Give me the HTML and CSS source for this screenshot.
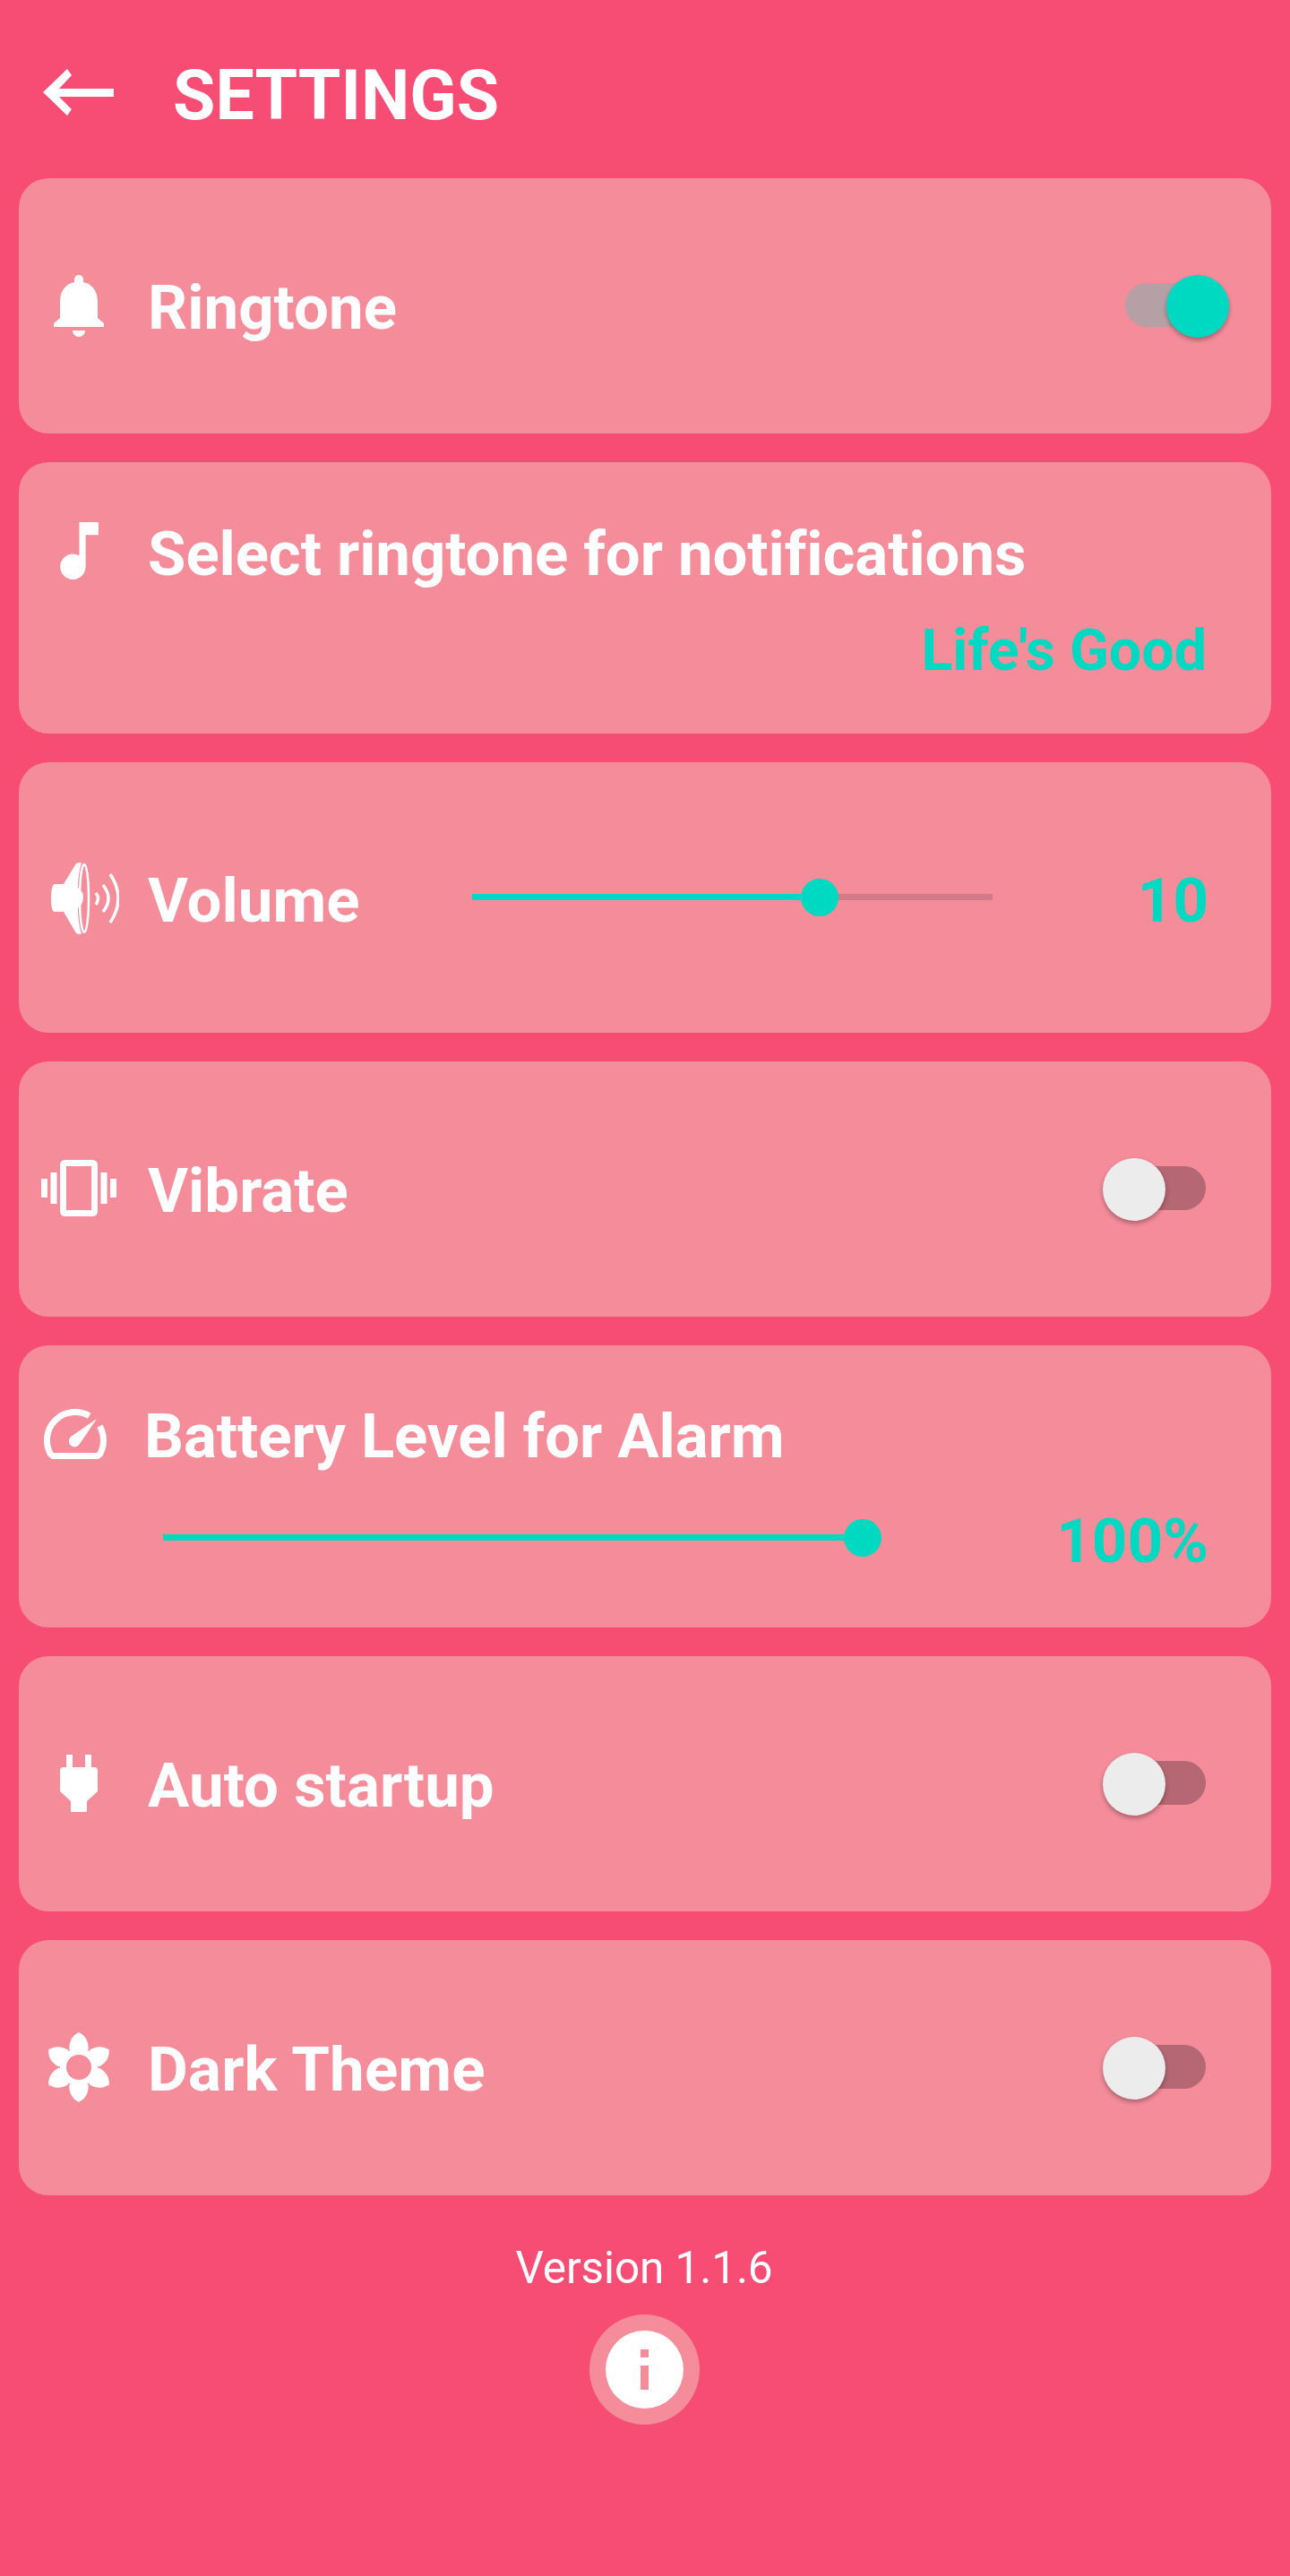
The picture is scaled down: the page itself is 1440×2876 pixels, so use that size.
FILE: index.html
```html
<!DOCTYPE html>
<html lang="en">
<head>
  <meta charset="UTF-8" />
  <meta name="viewport" content="width=device-width, initial-scale=1.0" />
  <title>Settings</title>
  <link rel="stylesheet" href="styles.css">
</head>
<body>
  <header class="topbar">
    <svg class="back-icon" viewBox="0 0 79 52"><path d="M0 26 27 0 32 7 18 22H79V31H18L32 45 27 52Z"/></svg>
    <h1 class="page-title">SETTINGS</h1>
  </header>

  <main class="settings">
    <section class="card card-toggle">
      <div class="row">
        <span class="icon-col"><svg class="icon icon-bell" viewBox="0 0 56 69"><path d="M23 8V5a5 5 0 0 1 10 0V8C43 10 49 18 49 30V48L56 54V58H0V54L7 48V30C7 18 13 10 23 8Z"/><path d="M21 62H35C35 66 32 69 28 69 24 69 21 66 21 62Z"/></svg></span>
        <span class="label">Ringtone</span>
        <div class="switch switch-on"><span class="thumb"></span></div>
      </div>
    </section>

    <section class="card card-ringtone">
      <div class="row">
        <span class="icon-col"><svg class="icon icon-note" viewBox="6 3 12 18"><path d="M12 3v10.55c-.59-.34-1.27-.55-2-.55-2.21 0-4 1.79-4 4s1.79 4 4 4 4-1.79 4-4V7h4V3h-6z"/></svg></span>
        <span class="label label-tight">Select ringtone for notifications</span>
      </div>
      <div class="ringtone-name value">Life's Good</div>
    </section>

    <section class="card card-volume">
      <div class="row">
        <span class="icon-col"><svg class="icon icon-volume" viewBox="0 0 76 80">
          <path d="M4 24H14L28 1Q30 0 34 0C31 10 30 20 30 28Q36 32 36 39T30 51C30 60 31 70 34 80Q30 80 28 79L14 55H4Q0 55 0 40T4 24Z"/>
          <ellipse class="icon-line" cx="37" cy="40" rx="5" ry="38"/>
          <path class="icon-line icon-waves" d="M50 34Q55 40 50 47M58 25Q70 40 58 55M66 13Q84 40 66 67"/>
        </svg></span>
        <span class="label label-volume">Volume</span>
        <div class="slider slider-volume">
          <div class="slider-fill" style="width: 66.7%"><span class="slider-thumb"></span></div>
        </div>
        <span class="value value-end">10</span>
      </div>
    </section>

    <section class="card card-toggle">
      <div class="row">
        <span class="icon-col"><svg class="icon icon-vibrate" viewBox="0 0 84 63">
          <rect class="icon-line icon-phone" x="24.5" y="3.5" width="35" height="56" rx="2"/>
          <rect x="0" y="21" width="7" height="21"/><rect x="10.500" y="14" width="7" height="35"/>
          <rect x="66.500" y="14" width="7" height="35"/><rect x="77" y="21" width="7" height="21"/>
        </svg></span>
        <span class="label">Vibrate</span>
        <div class="switch"><span class="thumb"></span></div>
      </div>
    </section>

    <section class="card card-battery">
      <div class="row">
        <span class="icon-col icon-col-battery"><svg class="icon icon-gauge" viewBox="0 0 70 56">
          <path class="icon-line icon-gauge-line" d="M50.750 7.700A31.500 31.500 0 0 0 7.700 50.750L10 52.500H60L62.300 50.750A31.500 31.500 0 0 0 62.300 19.250"/>
          <path d="M59 11 30 31A6.500 6.500 0 1 0 40 39Z"/>
        </svg></span>
        <span class="label label-tight">Battery Level for Alarm</span>
      </div>
      <div class="row row-battery">
        <div class="slider slider-battery">
          <div class="slider-fill" style="width: 100%"><span class="slider-thumb"></span></div>
        </div>
        <span class="value value-end">100%</span>
      </div>
    </section>

    <section class="card card-toggle">
      <div class="row">
        <span class="icon-col"><svg class="icon icon-plug" viewBox="0 0 42 64"><path d="M7 0H14V14H28V0H35V14H38Q42 14 42 18V41L30 52V64H12V52L0 41V18Q0 14 4 14H7Z"/></svg></span>
        <span class="label">Auto startup</span>
        <div class="switch"><span class="thumb"></span></div>
      </div>
    </section>

    <section class="card card-toggle">
      <div class="row">
        <span class="icon-col"><svg class="icon icon-flower" viewBox="-34 -39 68 78">
          <path d="M0-39C8-35 11-28 10.700-20L0-5-10.700-20C-11-28-8-35 0-39Z"/>
          <path transform="rotate(60)" d="M0-39C8-35 11-28 10.700-20L0-5-10.700-20C-11-28-8-35 0-39Z"/>
          <path transform="rotate(120)" d="M0-39C8-35 11-28 10.700-20L0-5-10.700-20C-11-28-8-35 0-39Z"/>
          <path transform="rotate(180)" d="M0-39C8-35 11-28 10.700-20L0-5-10.700-20C-11-28-8-35 0-39Z"/>
          <path transform="rotate(240)" d="M0-39C8-35 11-28 10.700-20L0-5-10.700-20C-11-28-8-35 0-39Z"/>
          <path transform="rotate(300)" d="M0-39C8-35 11-28 10.700-20L0-5-10.700-20C-11-28-8-35 0-39Z"/>
          <circle r="21"/>
          <circle class="icon-hole" r="14"/>
        </svg></span>
        <span class="label label-wide">Dark Theme</span>
        <div class="switch"><span class="thumb"></span></div>
      </div>
    </section>
  </main>

  <footer class="about">
    <div class="version">Version 1.1.6</div>
    <div class="info-ring">
      <svg class="info-icon" viewBox="0 0 87 87">
        <circle cx="43.500" cy="43.500" r="43.500"/>
        <rect class="icon-hole" x="39" y="21" width="9" height="9"/>
        <rect class="icon-hole" x="39" y="39" width="9" height="27"/>
      </svg>
    </div>
  </footer>
</body>
</html>
```

FILE: styles.css
```css
body {
  font-family: 'Roboto', Arial, sans-serif;
  margin: 0;
  padding: 0;
  min-height: 2876px;
  box-sizing: border-box;
  background-color: #f74c73;
  color: white;
}
svg {
  display: block;
  fill: white;
}
.icon-line {
  fill: none;
  stroke: white;
  stroke-width: 2.5;
}
.icon-hole {
  fill: #f48c9a;
}

/* top bar */
.topbar {
  display: flex;
  align-items: flex-start;
  height: 199px;
  padding: 69px 0 0 48px;
  box-sizing: border-box;
}
.back-icon {
  width: 79px;
  height: 52px;
  margin-top: 8px;
  margin-right: 66px;
}
.page-title {
  margin: 0;
  font-size: 77px;
  line-height: 77px;
  font-weight: 700;
}

/* cards */
.settings {
  display: flex;
  flex-direction: column;
  gap: 32px;
  padding: 0 21px;
}
.card {
  background-color: #f48c9a;
  border-radius: 33px;
  box-sizing: border-box;
  padding-right: 70px;
}
.card-toggle {
  height: 285px;
  padding-top: 105px;
}
.card-ringtone {
  height: 302.5px;
  padding-top: 62.5px;
}
.card-volume {
  height: 302.5px;
  padding-top: 115px;
}
.card-battery {
  height: 315px;
  padding-top: 62.4px;
}
.row {
  display: flex;
  align-items: flex-start;
  height: 80px;
}
.row-battery {
  margin-top: 37px;
  padding-left: 161px;
}
.icon-col {
  display: flex;
  justify-content: center;
  flex: 0 0 134px;
  margin-right: 10px;
}
.icon-col-battery {
  flex-basis: 126px;
  margin-right: 14px;
}
.label {
  font-size: 69px;
  line-height: 80px;
  font-weight: 700;
  white-space: nowrap;
}
.label-tight {
  letter-spacing: -0.1px;
}
.label-wide {
  letter-spacing: 0.18px;
}
.label-volume {
  width: 362px;
}
.value {
  font-size: 69px;
  line-height: 80px;
  font-weight: 700;
  color: #00d9c2;
  white-space: nowrap;
}
.value-end {
  margin-left: auto;
}
.ringtone-name {
  font-size: 64.5px;
  text-align: right;
  margin-top: 27.5px;
  padding-right: 2px;
}

/* icons */
.icon-bell {
  width: 56px;
  height: 69px;
  margin-top: 3px;
}
.icon-note {
  width: 43px;
  height: 64px;
  margin-top: 4.5px;
}
.icon-volume {
  width: 76px;
  height: 80px;
  margin-top: -3px;
  margin-left: 14px;
}
.icon-waves {
  stroke-width: 3.5;
}
.icon-vibrate {
  width: 84px;
  height: 63px;
  margin-top: 5px;
}
.icon-phone {
  stroke-width: 7;
}
.icon-gauge {
  width: 70px;
  height: 56px;
  margin-top: 9px;
}
.icon-gauge-line {
  stroke-width: 7;
}
.icon-plug {
  width: 42px;
  height: 64px;
  margin-top: 5px;
}
.icon-flower {
  width: 68px;
  height: 78px;
  margin-top: -2px;
}

/* switches */
.switch {
  position: relative;
  flex: 0 0 90px;
  height: 49px;
  margin: 12px 3px 0 auto;
  border-radius: 25px;
  background-color: #b56773;
}
.switch-on {
  background-color: #b5a0a5;
}
.thumb {
  position: absolute;
  top: -9px;
  left: -25px;
  width: 70px;
  height: 70px;
  border-radius: 50%;
  background-color: #ececec;
  box-shadow: 0 3px 5px rgba(0, 0, 0, 0.3);
}
.switch-on .thumb {
  left: 46px;
  background-color: #00d9c2;
}

/* sliders */
.slider {
  height: 7px;
  margin-top: 32px;
  background-color: #d27b88;
}
.slider-volume {
  width: 581px;
}
.slider-battery {
  width: 781px;
}
.slider-fill {
  position: relative;
  height: 100%;
  background-color: #00d9c2;
}
.slider-thumb {
  position: absolute;
  top: -17px;
  right: -21px;
  width: 42px;
  height: 42px;
  border-radius: 50%;
  background-color: #00d9c2;
}

/* footer */
.about {
  display: flex;
  flex-direction: column;
  align-items: center;
  margin-top: 51px;
  padding-right: 2px;
}
.version {
  font-size: 49.5px;
  line-height: 60px;
  letter-spacing: -0.1px;
}
.info-ring {
  margin-top: 22px;
  padding: 18px;
  border-radius: 50%;
  background-color: #f48c9a;
}
.info-icon {
  width: 87px;
  height: 87px;
}
```
